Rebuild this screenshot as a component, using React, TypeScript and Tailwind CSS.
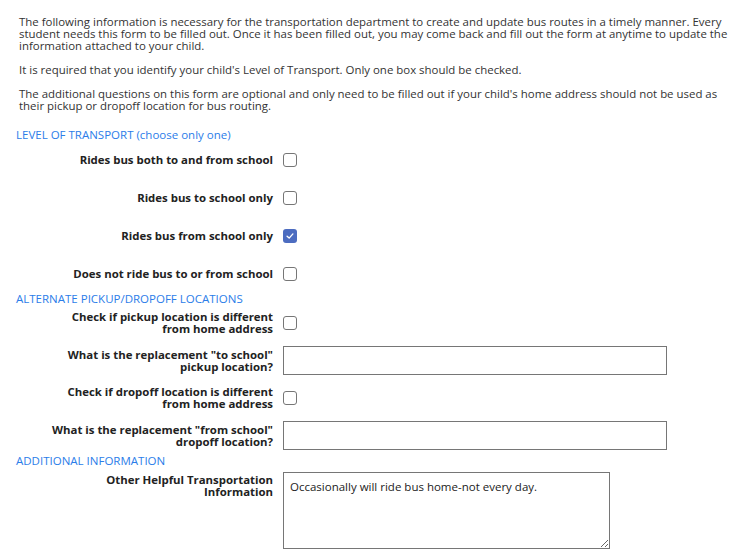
import { ReactNode } from 'react'

function Box({ checked = false }: { checked?: boolean }) {
  if (checked) {
    return (
      <span className="flex h-[14px] w-[14px] items-center justify-center rounded-[3px] bg-[#4c6cc0]">
        <svg viewBox="0 0 12 12" className="h-[10px] w-[10px]">
          <path d="M2.5 6.2 L5 8.5 L9.5 3.5" fill="none" stroke="#fff" strokeWidth="1.6" strokeLinecap="round" strokeLinejoin="round" />
        </svg>
      </span>
    )
  }
  return <span className="block h-[14px] w-[14px] rounded-[3px] border border-[#767676] bg-white" />
}

function Heading({ children }: { children: ReactNode }) {
  return <div className="h-[12px] whitespace-nowrap pl-[16px] text-[11.5px] leading-[12px] text-[#2b7de9]">{children}</div>
}

function Row({ label, h, children }: { label: ReactNode; h: string; children: ReactNode }) {
  return (
    <div className={`flex items-center ${h}`}>
      <div className="w-[273px] whitespace-nowrap text-right text-[11.4px] font-bold leading-[12px] text-[#222]">{label}</div>
      <div className="ml-[10px]">{children}</div>
    </div>
  )
}

export default function App() {
  return (
    <div className="h-[555px] w-[747px] overflow-hidden bg-white pt-[16px] font-['Open_Sans',sans-serif] text-[#222]">
      <div className="space-y-[12px] whitespace-nowrap pl-[19px] text-[11.45px] leading-[12px] text-[#333]">
        <p>
          The following information is necessary for the transportation department to create and update bus routes in a timely manner. Every
          <br />
          student needs this form to be filled out. Once it has been filled out, you may come back and fill out the form at anytime to update the
          <br />
          information attached to your child.
        </p>
        <p>It is required that you identify your child's Level of Transport. Only one box should be checked.</p>
        <p>
          The additional questions on this form are optional and only need to be filled out if your child's home address should not be used as
          <br />
          their pickup or dropoff location for bus routing.
        </p>
      </div>

      <div className="mt-[17px]">
        <Heading>LEVEL OF TRANSPORT (choose only one)</Heading>
        <Row label="Rides bus both to and from school" h="h-[38px]">
          <Box />
        </Row>
        <Row label="Rides bus to school only" h="h-[38px]">
          <Box />
        </Row>
        <Row label="Rides bus from school only" h="h-[38px]">
          <Box checked />
        </Row>
        <Row label="Does not ride bus to or from school" h="h-[38px]">
          <Box />
        </Row>

        <Heading>ALTERNATE PICKUP/DROPOFF LOCATIONS</Heading>
        <Row label={<>Check if pickup location is different<br />from home address</>} h="h-[36px]">
          <Box />
        </Row>
        <Row label={<>What is the replacement "to school"<br />pickup location?</>} h="h-[39px]">
          <input type="text" className="block h-[29px] w-[384px] border border-[#767676] px-1 outline-none" />
        </Row>
        <Row label={<>Check if dropoff location is different<br />from home address</>} h="h-[36px]">
          <Box />
        </Row>
        <Row label={<>What is the replacement "from school"<br />dropoff location?</>} h="h-[39px]">
          <input type="text" className="block h-[29px] w-[384px] border border-[#767676] px-1 outline-none" />
        </Row>

        <Heading>ADDITIONAL INFORMATION</Heading>
        <div className="mt-[5px] flex items-start">
          <div className="w-[273px] whitespace-nowrap pt-[2px] text-right text-[11.4px] font-bold leading-[12px] text-[#222]">
            Other Helpful Transportation
            <br />
            Information
          </div>
          <textarea
            className="ml-[10px] block h-[77px] w-[327px] resize border border-[#767676] px-[6px] py-[7px] text-[11.5px] leading-[14px] text-[#222] outline-none"
            defaultValue="Occasionally will ride bus home-not every day."
          />
        </div>
      </div>
    </div>
  )
}
